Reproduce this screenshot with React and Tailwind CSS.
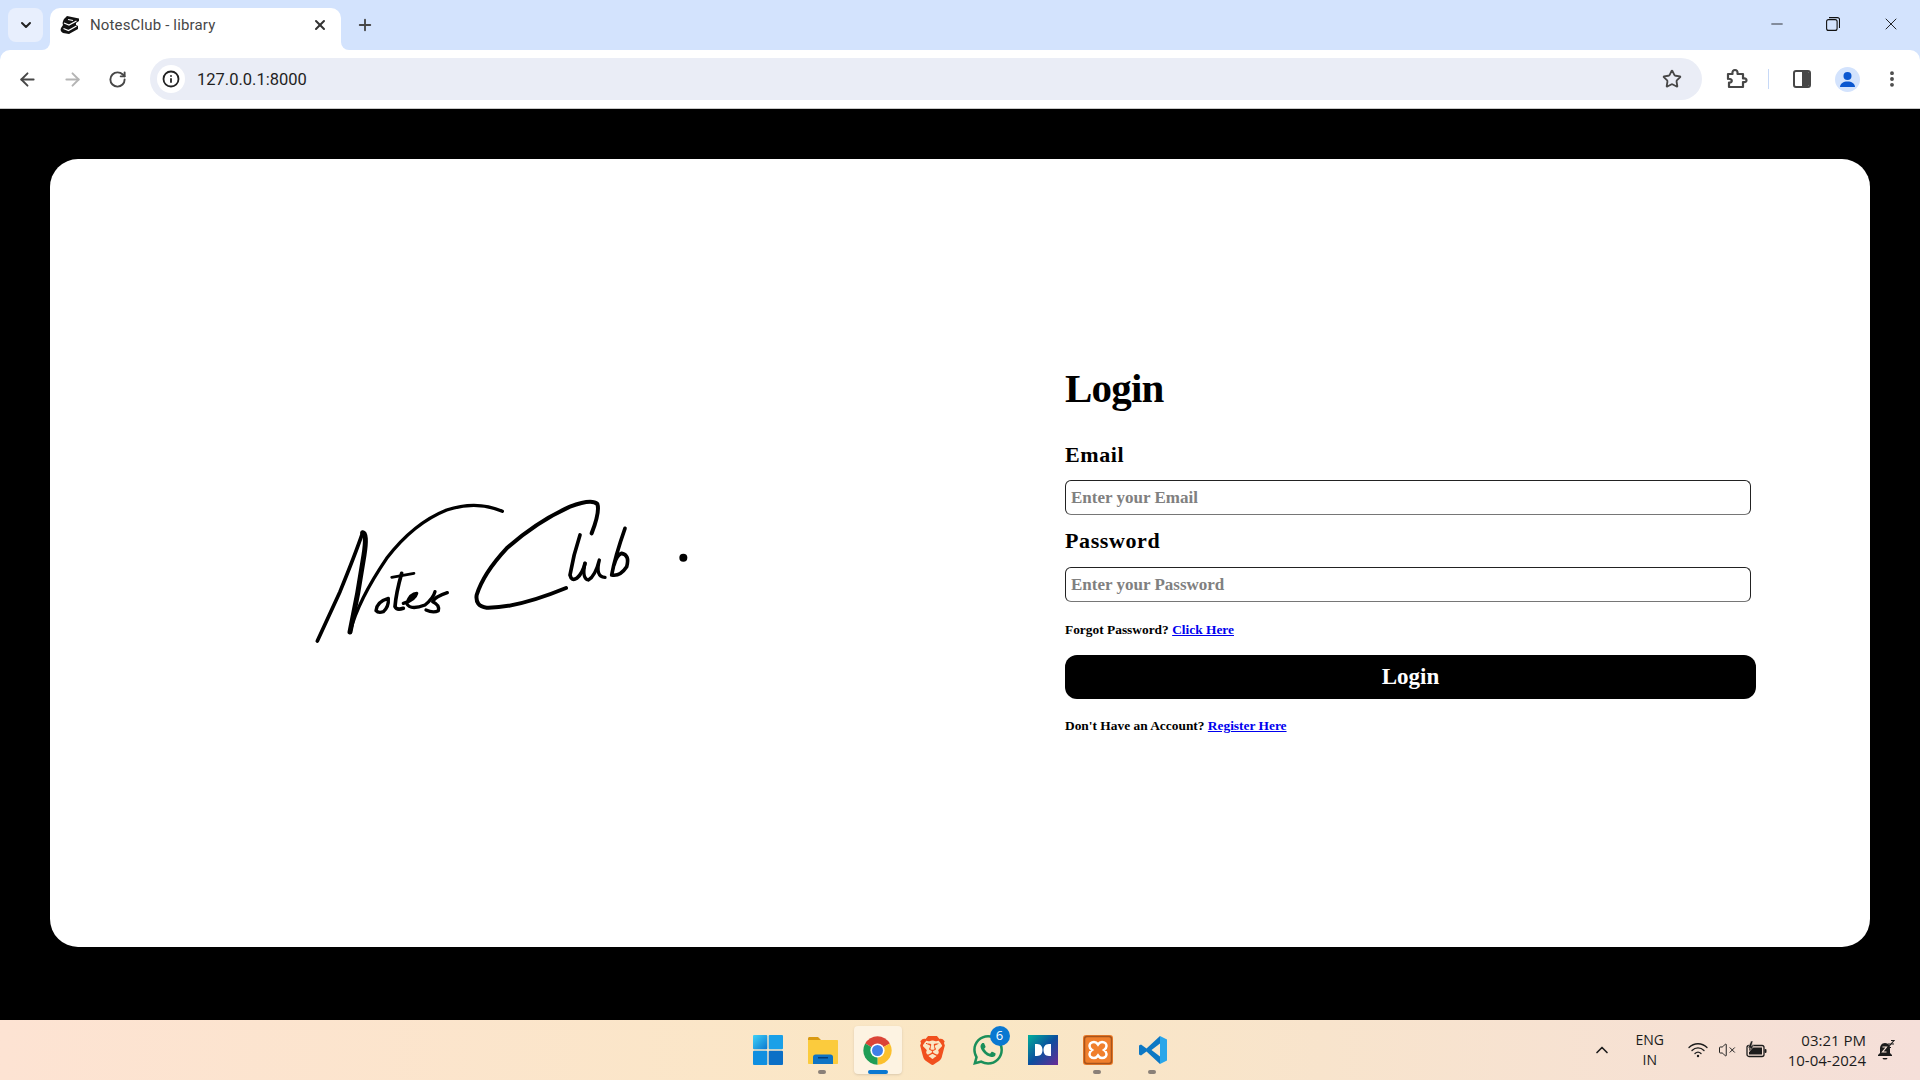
import { ArrowLeft, ArrowRight, ChevronDown, ChevronUp, Info, Minus, Plus, RotateCw, Star, EllipsisVertical, X, VolumeX } from "lucide-react";
import { SiBrave, SiWhatsapp } from "react-icons/si";

const serif = "font-['Liberation_Serif',serif]";

function BookIcon() {
  return (
    <svg width="20" height="20" viewBox="0 0 20 20">
      <path d="M7 1 19 3.500V6l-3 2v2l2 1v3l-9 5-6-1C1 17 0 15 1 13l2-3C2 8 3 6 4 4z" fill="#111" />
      <path d="M3.500 13.500 8.500 15.500 16.500 11M4 8l5 2 7.500-4" fill="none" stroke="#fff" strokeWidth="1.200" />
      <path d="M8 4.500 13 5.500" fill="none" stroke="#fff" strokeWidth="1.200" />
    </svg>
  );
}

function ExtensionIcon() {
  return (
    <svg width="24" height="24" viewBox="0 0 24 24" fill="none" stroke="#474747" strokeWidth="2.200" strokeLinejoin="round">
      <path d="M4 7h4.500c-.5-3 1-4 2.500-4s3 1 2.500 4H19v4.500c3-.5 3.500.8 3.500 1.700s-.5 2.300-3.500 1.800V20H5v-4.500c2 .3 2.800-.8 2.800-1.800S6 11.500 4 11.800z" />
    </svg>
  );
}

function NotesClubLogo() {
  return (
    <svg width="430" height="170" viewBox="0 0 1290 510" fill="none" stroke="#000" strokeLinecap="round" strokeLinejoin="round" role="img" aria-label="Notes Club logo">
      <path d="M82 483 150 335 Q195 225 218 158" strokeWidth="11" />
      <path d="M218 158 Q232 160 222 225 Q205 340 180 456" strokeWidth="15" />
      <path d="M180 456 Q205 360 290 235 Q370 130 470 90 Q560 60 637 94" strokeWidth="10" />
      <path d="M295 355 Q260 365 258 392 Q265 400 280 395 Q297 380 295 355" strokeWidth="10" />
      <path d="M335 280 Q318 340 315 380 Q320 392 340 385" strokeWidth="11" />
      <path d="M305 292 372 280" strokeWidth="8" />
      <path d="M340 370 Q375 360 380 340 Q362 340 350 370 Q360 392 405 375 Q430 355 435 335" strokeWidth="10" />
      <path d="M472 338 Q435 350 428 365 Q450 375 445 392 Q430 400 408 390" strokeWidth="10" />
      <path d="M905 160 Q930 95 922 72 Q905 55 840 80 Q740 125 650 205 Q580 280 560 345 Q555 378 590 383 Q680 385 828 324" strokeWidth="12" />
      <path d="M870 165 Q850 225 840 285 Q845 305 860 295 Q878 280 885 250" strokeWidth="11" />
      <path d="M885 250 Q875 295 895 300 Q915 290 928 240 Q915 290 945 292" strokeWidth="10" />
      <path d="M1005 145 Q975 230 965 285 Q990 290 1010 260 Q1020 225 995 220 Q980 225 972 255" strokeWidth="11" />
      <circle cx="1180" cy="233" r="12" fill="#000" stroke="none" />
    </svg>
  );
}

function WindowsIcon() {
  return (
    <svg width="30" height="30" viewBox="0 0 30 30">
      <defs>
        <linearGradient id="winA" x1="0" y1="0" x2="1" y2="1">
          <stop offset="0" stopColor="#3fd2f7" />
          <stop offset="1" stopColor="#0a78d1" />
        </linearGradient>
      </defs>
      <rect x="0" y="0" width="14.300" height="14.300" rx="1" fill="url(#winA)" />
      <rect x="15.700" y="0" width="14.300" height="14.300" rx="1" fill="#1aa0e8" />
      <rect x="0" y="15.700" width="14.300" height="14.300" rx="1" fill="#0f8fe0" />
      <rect x="15.700" y="15.700" width="14.300" height="14.300" rx="1" fill="#0b6fc6" />
    </svg>
  );
}

function FolderIcon() {
  return (
    <svg width="30" height="30" viewBox="0 0 30 30">
      <path d="M0 3.500C0 2.700.7 2 1.500 2H10l3 3h-13z" fill="#d99a12" />
      <path d="M0 5h29c.6 0 1 .4 1 1v22c0 .6-.4 1-1 1H1c-.6 0-1-.4-1-1z" fill="#fbcb3d" />
      <path d="M5 29v-7c0-1.500 1-2.500 2.500-2.500h15c1.500 0 2.500 1 2.500 2.500v7z" fill="#0f74c4" />
      <rect x="10" y="22" width="10" height="1.500" fill="#063e78" />
    </svg>
  );
}

function ChromeIcon() {
  return (
    <svg width="31" height="31" viewBox="0 0 48 48">
      <path d="M24 24 4.950 13A22 22 0 0 1 43.050 13z" fill="#db4437" />
      <path d="M24 24 43.050 13A22 22 0 0 1 24 46z" fill="#fbc02d" />
      <path d="M24 24 24 46A22 22 0 0 1 4.950 13z" fill="#1f9d55" />
      <circle cx="24" cy="24" r="11" fill="#fff" />
      <circle cx="24" cy="24" r="8.500" fill="#3f7fe8" />
    </svg>
  );
}

function DolbyIcon() {
  return (
    <svg width="30" height="30" viewBox="0 0 30 30">
      <defs>
        <linearGradient id="dlb" x1="0" y1="0" x2="1" y2="1">
          <stop offset="0" stopColor="#00b09b" />
          <stop offset="0.500" stopColor="#0b4f9e" />
          <stop offset="1" stopColor="#6b2a96" />
        </linearGradient>
      </defs>
      <rect width="30" height="30" fill="url(#dlb)" />
      <path d="M7 9h2c4 0 5.500 3 5.500 6S13 21 9 21H7zM23 9h-2c-4 0-5.500 3-5.500 6s1.500 6 5.500 6h2z" fill="#fff" />
    </svg>
  );
}

function XamppIcon() {
  return (
    <svg width="30" height="30" viewBox="0 0 30 30">
      <rect width="30" height="30" rx="3" fill="#f07f2c" />
      <rect x="1.500" y="1.500" width="27" height="27" rx="2.500" fill="none" stroke="#a9541b" strokeWidth="1.500" />
      <path d="M11 7c-3 0-4.500 2-4.500 4s1 3 2.500 4c-1.500 1-2.500 2-2.500 4s1.500 4 4.500 4c2 0 3-1 4-2.500 1 1.500 2 2.500 4 2.500 3 0 4.500-2 4.500-4s-1-3-2.500-4c1.500-1 2.500-2 2.500-4s-1.500-4-4.500-4c-2 0-3 1-4 2.500C14 8 13 7 11 7z" fill="none" stroke="#fff" strokeWidth="2.500" />
    </svg>
  );
}

function VsCodeIcon() {
  return (
    <svg width="30" height="30" viewBox="0 0 30 30">
      <path d="M22 1 29 4.500v21L22 29z" fill="#2aa6ea" />
      <path d="M22 1 8.500 13.500 3 9.500 1 10.500v9l2 1 5.500-4L22 29v-7.500L13.500 15 22 8.500z" fill="#0d78c4" />
    </svg>
  );
}

function TrayWifi() {
  return (
    <svg width="20" height="18" viewBox="0 0 20 18" fill="none" stroke="#1c1c1c" strokeWidth="1.300" strokeLinecap="round">
      <path d="M1 6.500C6 1.500 14 1.500 19 6.500" />
      <path d="M4 9.500C7.500 6 12.500 6 16 9.500" />
      <path d="M7 12.500c1.800-1.700 4.200-1.700 6 0" />
      <circle cx="10" cy="15" r="1.200" fill="#1c1c1c" stroke="none" />
    </svg>
  );
}

function TrayBattery() {
  return (
    <svg width="21" height="18" viewBox="0 0 21 18">
      <rect x="1" y="4.500" width="17" height="11" rx="2" fill="none" stroke="#1c1c1c" strokeWidth="1.300" />
      <rect x="3" y="6.500" width="13" height="7" fill="#1c1c1c" />
      <rect x="18.500" y="8" width="2" height="4" rx="1" fill="#1c1c1c" />
      <path d="M5 0 2 7h2.500L3 11l5-6H5.500L7 0z" fill="#1c1c1c" stroke="#f7e3d8" strokeWidth=".5" />
    </svg>
  );
}

function TrayBell() {
  return (
    <svg width="18" height="20" viewBox="0 0 18 20">
      <path d="M8 3C4.500 3 3 6 3 9v4l-2 2v1h14v-1l-2-2V9c0-3-1.500-6-5-6z" fill="#1c1c1c" />
      <path d="M5.500 18h5a2.500 1.500 0 0 1-5 0z" fill="#1c1c1c" />
      <path d="M5.500 7h4l-4 5h4" fill="none" stroke="#f7e3d8" strokeWidth="1.200" />
      <path d="M11 4h3l-3 3.500h3M14 .5h3L14 4h3" fill="none" stroke="#1c1c1c" strokeWidth="1.100" />
    </svg>
  );
}

function TaskButton({ active, dot, children }) {
  return (
    <div className={`relative flex h-12 w-12 items-center justify-center rounded ${active ? "bg-[#fdf3e2] shadow-sm" : ""}`}>
      {children}
      {dot && <span className="absolute bottom-0 left-[19px] h-[4px] w-[8px] rounded-full bg-[#8a8078]" />}
      {active && <span className="absolute bottom-0 left-[14px] h-[4px] w-[20px] rounded-full bg-[#0a78d1]" />}
    </div>
  );
}

export default function App() {
  return (
    <div className="flex h-screen w-full flex-col overflow-hidden bg-[#d3e3fd] font-['Open_Sans',sans-serif]">
      {/* tab strip */}
      <div className="flex h-[50px] shrink-0 items-end pl-2">
        <div className="mb-[8px] flex h-[34px] w-[35px] items-center justify-center rounded-lg bg-[#e8effd]">
          <ChevronDown size={16} strokeWidth={3} color="#222" />
        </div>
        <div className="relative ml-[7px] flex h-[42px] w-[291px] items-center rounded-t-[10px] bg-white pb-[8px] pl-[10px]">
          <BookIcon />
          <span className="ml-[10px] font-['Roboto',sans-serif] text-[15px] tracking-[0.15px] text-[#474747]">NotesClub - library</span>
          <X size={16} strokeWidth={3} color="#333" className="absolute right-[13px]" />
          <div className="absolute bottom-0 -left-2 h-2 w-2 bg-white">
            <div className="h-2 w-2 rounded-br-lg bg-[#d3e3fd]" />
          </div>
          <div className="absolute -right-2 bottom-0 h-2 w-2 bg-white">
            <div className="h-2 w-2 rounded-bl-lg bg-[#d3e3fd]" />
          </div>
        </div>
        <div className="mb-[8px] ml-2 flex h-[34px] w-8 items-center justify-center">
          <Plus size={18} strokeWidth={2.500} color="#474747" />
        </div>
        <div className="mb-[5px] ml-auto flex h-[42px] items-center">
          <div className="flex w-14 justify-center"><Minus size={18} strokeWidth={1.100} color="#111" /></div>
          <div className="flex w-14 justify-center">
            <svg width="14" height="14" viewBox="0 0 14 14" fill="none" stroke="#111" strokeWidth="1.100">
              <rect x=".6" y="2.600" width="10.500" height="10.800" rx="2" />
              <path d="M3 .6h8.500a2 2 0 0 1 2 2V11" />
            </svg>
          </div>
          <div className="flex w-[59px] justify-center"><X size={20} strokeWidth={1.100} color="#111" /></div>
        </div>
      </div>

      {/* toolbar */}
      <div className="flex h-[59px] shrink-0 items-center rounded-t-[10px] border-b border-[#c7c7c7] bg-white pl-[5px] pr-2">
        <div className="flex w-[45px] justify-center"><ArrowLeft size={21} strokeWidth={2.200} color="#474747" /></div>
        <div className="flex w-[45px] justify-center"><ArrowRight size={21} strokeWidth={2.200} color="#b4b4b4" /></div>
        <div className="flex w-[45px] justify-center"><RotateCw size={19} strokeWidth={2.400} color="#474747" /></div>
        <div className="ml-[10px] flex h-[42px] flex-1 items-center rounded-full bg-[#eaedf6] pl-[7px] pr-[20px]">
          <div className="flex h-[28px] w-[28px] items-center justify-center rounded-full bg-white">
            <Info size={18} strokeWidth={2.400} color="#222" />
          </div>
          <span className="ml-[12px] mt-[2px] font-['Roboto',sans-serif] text-[16.500px] text-[#1f1f1f]">127.0.0.1:8000</span>
          <Star size={20} strokeWidth={2.200} color="#474747" className="ml-auto" />
        </div>
        <div className="ml-[14px] flex w-10 justify-center"><ExtensionIcon /></div>
        <div className="ml-[12px] h-5 w-px bg-[#c7d9f7]" />
        <div className="ml-[13px] flex w-10 justify-center">
          <div className="flex h-[18px] w-[18px] overflow-hidden rounded-[3px] border-2 border-[#474747]">
            <div className="w-1/2" />
            <div className="w-1/2 bg-[#474747]" />
          </div>
        </div>
        <div className="ml-[5px] flex w-10 justify-center">
          <div className="flex h-[25px] w-[25px] items-center justify-center rounded-full bg-[#d3e3fd]">
            <svg width="17" height="17" viewBox="0 0 17 17" fill="#0b57d0">
              <circle cx="8.500" cy="5" r="4" />
              <path d="M1 16c0-3.500 3.500-5.500 7.500-5.500S16 12.500 16 16z" />
            </svg>
          </div>
        </div>
        <div className="ml-[5px] flex w-10 justify-center"><EllipsisVertical size={20} strokeWidth={2.600} color="#474747" /></div>
      </div>

      {/* page */}
      <div className="flex flex-1 bg-black pb-[73px] pl-[50px] pr-[50px] pt-[50px]">
        <div className="flex flex-1 items-center rounded-[28px] bg-white">
          <div className="flex w-[1015px] shrink-0 pl-[240px] pt-[24px]">
            <NotesClubLogo />
          </div>
          <form className={`mb-[5px] flex w-[691px] flex-col ${serif} font-bold text-black`}>
            <h1 className="text-[41px] leading-[44px] tracking-[-0.8px]">Login</h1>
            <label className="mt-[32px] text-[22px] leading-[26px] tracking-[0.6px]">Email</label>
            <input
              type="text"
              placeholder="Enter your Email"
              className="mt-[12px] h-[35px] w-[686px] rounded-md border border-[#222] border-b-[#767676] px-[5px] text-[17px] font-bold outline-none placeholder:text-[#808080]"
            />
            <label className="mt-[13px] text-[22px] leading-[26px] tracking-[0.6px]">Password</label>
            <input
              type="password"
              placeholder="Enter your Password"
              className="mt-[13px] h-[35px] w-[686px] rounded-md border border-[#222] border-b-[#767676] px-[5px] text-[17px] font-bold outline-none placeholder:text-[#808080]"
            />
            <p className="mt-[19px] text-[13.400px] leading-[18px]">
              Forgot Password? <a href="#" className="text-[#0000ee] underline">Click Here</a>
            </p>
            <button type="button" className="mt-[16px] h-[44px] w-[691px] rounded-xl bg-black text-[23px] font-bold text-white">
              Login
            </button>
            <p className="mt-[18px] text-[13.400px] leading-[18px]">
              Don't Have an Account? <a href="#" className="text-[#0000ee] underline">Register Here</a>
            </p>
          </form>
        </div>
      </div>

      {/* taskbar */}
      <div className="grid h-[60px] shrink-0 grid-cols-[1fr_auto_1fr] items-center bg-gradient-to-r from-[#fde3d3] via-[#fae7c4] to-[#f5dfd9] font-['Open_Sans',sans-serif] text-[#1c1c1c]">
        <div />
        <div className="flex items-center gap-[7px]">
          <TaskButton><WindowsIcon /></TaskButton>
          <TaskButton dot><FolderIcon /></TaskButton>
          <TaskButton active><ChromeIcon /></TaskButton>
          <TaskButton><SiBrave size={29} color="#f1501e" /></TaskButton>
          <TaskButton>
            <SiWhatsapp size={30} color="#1a8f5a" />
            <span className="absolute right-[2px] top-0 flex h-5 w-5 items-center justify-center rounded-full bg-[#0a78d1] text-[13px] text-white">6</span>
          </TaskButton>
          <TaskButton><DolbyIcon /></TaskButton>
          <TaskButton dot><XamppIcon /></TaskButton>
          <TaskButton dot><VsCodeIcon /></TaskButton>
        </div>
        <div className="flex items-center justify-end pr-[25px]">
          <ChevronUp size={20} strokeWidth={2} color="#1c1c1c" />
          <div className="ml-[18px] w-[40px] text-center text-[14px] leading-[20px]">
            <div>ENG</div>
            <div>IN</div>
          </div>
          <div className="ml-[18px] flex items-center gap-[10px]">
            <TrayWifi />
            <VolumeX size={18} strokeWidth={1.300} color="#1c1c1c" />
            <TrayBattery />
          </div>
          <div className="ml-[21px] text-right text-[15px] leading-[20px]">
            <div>03:21 PM</div>
            <div>10-04-2024</div>
          </div>
          <div className="ml-[11px]"><TrayBell /></div>
        </div>
      </div>
    </div>
  );
}
